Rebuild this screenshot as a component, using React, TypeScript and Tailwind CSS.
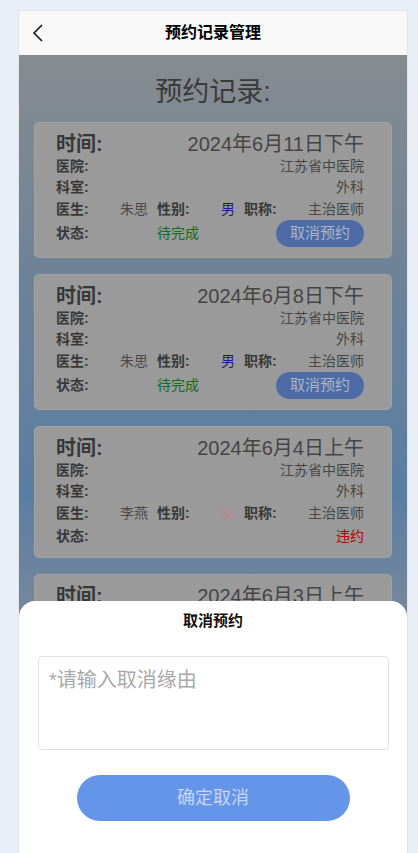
import React from "react";

type Rec = {
  time: string;
  doctor: string;
  gender: "男" | "女";
  status: "pending" | "broken";
};

const recs: Rec[] = [
  { time: "2024年6月11日下午", doctor: "朱思", gender: "男", status: "pending" },
  { time: "2024年6月8日下午", doctor: "朱思", gender: "男", status: "pending" },
  { time: "2024年6月4日上午", doctor: "李燕", gender: "女", status: "broken" },
  { time: "2024年6月3日上午", doctor: "李燕", gender: "女", status: "broken" },
];

function Card({ r }: { r: Rec }) {
  const pending = r.status === "pending";
  return (
    <div
      className={
        pending
          ? "mx-[15px] rounded-[5px] border border-[#a2a2a2] bg-[#9a9a9a] pl-[21px] pr-[27px] pt-[9px] pb-[11px]"
          : "mx-[15px] rounded-[5px] border border-[#a2a2a2] bg-[#9a9a9a] pl-[21px] pr-[27px] pt-[9px] pb-[9px]"
      }
    >
      <div className="flex items-center justify-between h-[24px]">
        <span className="text-[20px] font-bold text-[#383838]">时间:</span>
        <span className="text-[20px] text-[#454545]">{r.time}</span>
      </div>
      <div className="flex items-center justify-between h-[20px] text-[14px]">
        <span className="font-bold text-[#383838]">医院:</span>
        <span className="text-[#464646]">江苏省中医院</span>
      </div>
      <div className="flex items-center justify-between h-[22px] text-[14px]">
        <span className="font-bold text-[#383838]">科室:</span>
        <span className="text-[#464646]">外科</span>
      </div>
      <div className="flex items-center h-[22px] text-[14px]">
        <div className="flex w-[92px] justify-between">
          <span className="font-bold text-[#383838]">医生:</span>
          <span className="text-[#4a4a4a]">{r.doctor}</span>
        </div>
        <div className="ml-[9px] flex w-[78px] justify-between">
          <span className="font-bold text-[#383838]">性别:</span>
          <span className={r.gender === "男" ? "text-[#1c14a8]" : "text-[#c4808f]"}>
            {r.gender}
          </span>
        </div>
        <div className="ml-[9px] flex flex-1 justify-between">
          <span className="font-bold text-[#383838]">职称:</span>
          <span className="text-[#464646]">主治医师</span>
        </div>
      </div>
      {pending ? (
        <div className="flex items-center h-[26px] text-[14px]">
          <span className="w-[101px] font-bold text-[#383838]">状态:</span>
          <span className="text-[#176a17]">待完成</span>
          <div className="ml-auto flex h-[27px] w-[88px] shrink-0 items-center justify-center rounded-full bg-[#4d6ca6] text-[15px] text-[#a9b4c8]">
            取消预约
          </div>
        </div>
      ) : (
        <div className="flex items-center justify-between h-[24px] text-[14px]">
          <span className="font-bold text-[#383838]">状态:</span>
          <span className="text-[#b20000]">违约</span>
        </div>
      )}
    </div>
  );
}

export default function App() {
  return (
    <div
      className="min-h-[853px] w-[418px] bg-[#e9eef7] pt-[10px]"
      style={{ fontFamily: '"Liberation Sans", "Noto Sans CJK SC", sans-serif' }}
    >
      <div className="relative mx-[18px] h-[843px] w-[390px] overflow-hidden border-x border-t border-[#dfe3ea]">
        <div className="relative flex h-[44px] items-center justify-center bg-[#f8f8f8]">
          <svg
            className="absolute left-[12px] top-[13px]"
            width="14"
            height="18"
            viewBox="0 0 14 18"
            fill="none"
          >
            <path d="M11 1 L3 9 L11 17" stroke="#111" strokeWidth="1.6" />
          </svg>
          <span className="text-[16px] font-bold text-[#000]">预约记录管理</span>
        </div>
        <div className="h-[799px] bg-[linear-gradient(180deg,#878b90_0%,#6b8299_30%,#5a7ea4_55%,#7f8b97_75%,#808890_100%)]">
          <div className="flex h-[67px] items-center justify-center pt-[8px] text-[27px] text-[#3a3a3a]">
            预约记录:
          </div>
          <div className="flex flex-col gap-[16px]">
            {recs.map((r, i) => (
              <Card key={i} r={r} />
            ))}
          </div>
        </div>
        <div className="absolute bottom-0 left-0 right-0 top-[590px] rounded-t-[16px] bg-white">
          <div className="pt-[9px] text-center text-[15px] font-bold leading-[22px] text-[#111]">
            取消预约
          </div>
          <div className="ml-[19px] mr-[18px] mt-[24px] h-[94px] rounded-[4px] border border-[#e2e2e2] px-[10px] pt-[8px] text-[20px] text-[#a9a9a9]">
            *请输入取消缘由
          </div>
          <div className="mt-[25px] flex justify-center">
            <div className="flex h-[46px] w-[273px] items-center justify-center rounded-full bg-[#6595e8] text-[18px] text-[#c6d6f4]">
              确定取消
            </div>
          </div>
        </div>
      </div>
    </div>
  );
}
